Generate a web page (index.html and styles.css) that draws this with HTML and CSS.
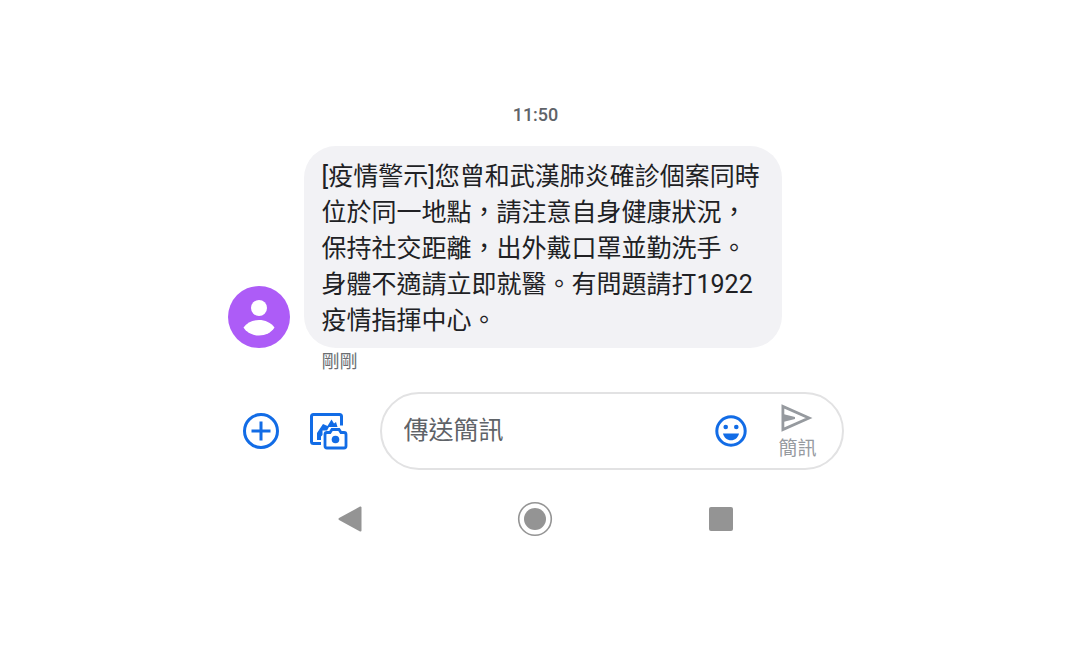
FILE: index.html
```html
<!DOCTYPE html>
<html lang="zh-Hant">
<head>
<meta charset="utf-8">
<meta name="viewport" content="width=device-width, initial-scale=1">
<title>簡訊</title>
<link rel="stylesheet" href="styles.css">
</head>
<body>
<main class="chat">
  <time class="time" datetime="11:50">11:50</time>
  <section class="message">
    <svg class="avatar" viewBox="0 0 62 62" aria-hidden="true">
      <circle cx="31" cy="31" r="31" fill="#ad5cf7"/>
      <circle cx="31" cy="22" r="8" fill="#fff"/>
      <path d="M15.500 41.500C19 36.500 25 34 31 34s12 2.500 15.500 7.500C43.500 46.500 37.500 49.500 31 49.500S18.500 46.500 15.500 41.500Z" fill="#fff"/>
    </svg>
    <p class="bubble">[疫情警示]您曾和武漢肺炎確診個案同時<br>位於同一地點，請注意自身健康狀況，<br>保持社交距離，出外戴口罩並勤洗手。<br>身體不適請立即就醫。有問題請打1922<br>疫情指揮中心。</p>
    <span class="status">剛剛</span>
  </section>
  <form class="composer">
    <div class="tools">
      <button class="icon-button" type="button" aria-label="新增">
        <svg width="38" height="38" viewBox="0 0 38 38" fill="none" stroke="#126ce6" stroke-width="3">
          <circle cx="19" cy="19" r="16.500"/>
          <path d="M19 9.500v19M9.500 19h19"/>
        </svg>
      </button>
      <button class="icon-button" type="button" aria-label="相片">
        <svg width="40" height="40" viewBox="0 0 40 40" fill="none" stroke="#126ce6" stroke-width="3">
          <path d="M12 32.500H4.500Q2.500 32.500 2.500 30.500V5.500Q2.500 3.500 4.500 3.500H30.500Q32.500 3.500 32.500 5.500V14.500"/>
          <path d="M8 29V22L14 13 18.500 15 22.500 8.500 25 12.500 27 11 28.500 16H20L18 19.500H13.500V24L12 25.500V29Z" fill="#126ce6" stroke="none"/>
          <path d="M18 21.500H21L23 18.500H30L32 21.500H35Q37 21.500 37 23.500V35Q37 37 35 37H18Q16 37 16 35V23.500Q16 21.500 18 21.500Z" stroke-width="2.800"/>
          <circle cx="26.500" cy="28.500" r="3.800" fill="#126ce6" stroke="none"/>
        </svg>
      </button>
    </div>
    <div class="field">
      <input class="input" type="text" placeholder="傳送簡訊" aria-label="傳送簡訊">
      <button class="icon-button" type="button" aria-label="表情符號">
        <svg width="32" height="32" viewBox="0 0 32 32">
          <circle cx="16" cy="16" r="14.200" fill="none" stroke="#126ce6" stroke-width="3"/>
          <circle cx="10.700" cy="12" r="2.300" fill="#126ce6"/>
          <circle cx="21.300" cy="12" r="2.300" fill="#126ce6"/>
          <path d="M8 18.500h16C23 22.800 20 25.300 16 25.300s-7-2.500-8-6.800Z" fill="#126ce6"/>
        </svg>
      </button>
      <button class="send" type="submit">
        <svg width="34" height="30" viewBox="0 0 34 30" fill="none" stroke="#969a9f" stroke-width="2.800">
          <path d="M2.900 3.500V26.500L29 15Z"/>
          <path d="M3 11L15 14V16L3 19Z" fill="#969a9f" stroke="none"/>
        </svg>
        <span>簡訊</span>
      </button>
    </div>
  </form>
  <nav class="system">
    <button class="icon-button" type="button" aria-label="返回">
      <svg width="24" height="26" viewBox="0 0 24 26"><path d="M1.500 13L22.500 1.500V24.500Z" fill="#949494" stroke="#949494" stroke-width="2" stroke-linejoin="round"/></svg>
    </button>
    <button class="icon-button" type="button" aria-label="主畫面">
      <svg width="36" height="36" viewBox="0 0 36 36"><circle cx="18" cy="18" r="16.300" fill="none" stroke="#949494" stroke-width="1.600"/><circle cx="18" cy="18" r="11" fill="#949494"/></svg>
    </button>
    <button class="icon-button" type="button" aria-label="最近使用">
      <svg width="24" height="24" viewBox="0 0 24 24"><rect width="24" height="24" rx="2" fill="#949494"/></svg>
    </button>
  </nav>
</main>
</body>
</html>
```
FILE: styles.css
```css
* {
  box-sizing: border-box;
}

body {
  margin: 0;
  background: #fff;
  color: #202124;
  font-family: Roboto, "Noto Sans CJK TC", sans-serif;
}

button,
input {
  border: 0;
  padding: 0;
  background: none;
  color: inherit;
  font: inherit;
}

svg {
  display: block;
}

.chat {
  display: flex;
  flex-direction: column;
  max-width: 616px;
  margin: 0 auto;
  padding: 103px 0 40px;
}

.time {
  align-self: center;
  color: #5f6368;
  font-size: 18px;
  font-weight: 500;
  line-height: 24px;
}

.message {
  display: grid;
  grid-template-columns: 62px auto;
  justify-content: start;
  align-items: end;
  column-gap: 14px;
  margin-top: 19px;
}

.avatar {
  width: 62px;
  height: 62px;
}

.bubble {
  margin: 0;
  padding: 13px 22px 9px 18px;
  border-radius: 32px;
  background: #f2f2f5;
  font-size: 25px;
  line-height: 36px;
}

.status {
  grid-column: 2;
  padding-left: 18px;
  color: #6b6e72;
  font-size: 18px;
  line-height: 28px;
}

.composer {
  display: flex;
  align-items: center;
  margin-top: 16px;
}

.tools {
  display: flex;
  align-items: center;
  gap: 29px;
  padding: 0 31px 0 14px;
}

.field {
  display: flex;
  flex: 1;
  align-items: center;
  min-width: 0;
  padding: 5px 25px 5px 22px;
  border: 2px solid #e2e2e3;
  border-radius: 40px;
}

.input {
  flex: 1;
  min-width: 0;
  font-size: 25px;
  line-height: 36px;
}

.input::placeholder {
  color: #5f6368;
  opacity: 1;
}

.send {
  display: flex;
  flex-direction: column;
  align-items: center;
  gap: 2px;
  margin-left: 31px;
  padding-top: 4px;
  color: #969a9f;
  font-size: 19px;
  line-height: 28px;
}

.system {
  display: grid;
  grid-template-columns: repeat(3, 1fr);
  justify-items: center;
  align-items: center;
  margin: 31px 30px 0;
}
```
